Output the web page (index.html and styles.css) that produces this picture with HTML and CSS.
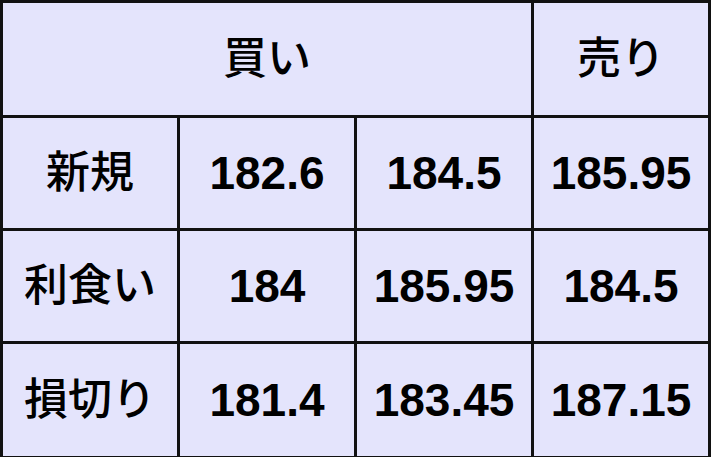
FILE: index.html
```html
<!DOCTYPE html>
<html lang="ja">
<head>
<meta charset="utf-8">
<link rel="stylesheet" href="styles.css">
</head>
<body>
<table class="grid">
  <colgroup><col class="c"><col class="c"><col class="c"><col class="c"></colgroup>
  <tr class="row head">
    <td class="jp" colspan="3">買い</td>
    <td class="jp">売り</td>
  </tr>
  <tr class="row">
    <td class="jp">新規</td>
    <td>182.6</td>
    <td>184.5</td>
    <td>185.95</td>
  </tr>
  <tr class="row">
    <td class="jp">利食い</td>
    <td>184</td>
    <td>185.95</td>
    <td>184.5</td>
  </tr>
  <tr class="row last">
    <td class="jp">損切り</td>
    <td>181.4</td>
    <td>183.45</td>
    <td>187.15</td>
  </tr>
</table>
</body>
</html>
```
FILE: styles.css
```css
html, body {
  margin: 0;
  padding: 0;
  background: #ffffff;
}
.grid {
  width: 711px;
  height: 457px;
  table-layout: fixed;
  border-collapse: collapse;
  background: #e4e4fc;
  font-family: "Liberation Sans", "Noto Sans CJK JP", sans-serif;
  font-weight: 700;
  color: #000;
}
.c { width: 25%; }
.row { height: 113px; }
.row.head { height: 115px; }
.row.last { height: 115px; }
.grid td {
  border: 3px solid #111;
  text-align: center;
  vertical-align: middle;
  font-size: 46px;
  padding: 0;
  line-height: 1;
}
.grid td.jp {
  font-size: 44px;
  font-weight: 500;
}
```
